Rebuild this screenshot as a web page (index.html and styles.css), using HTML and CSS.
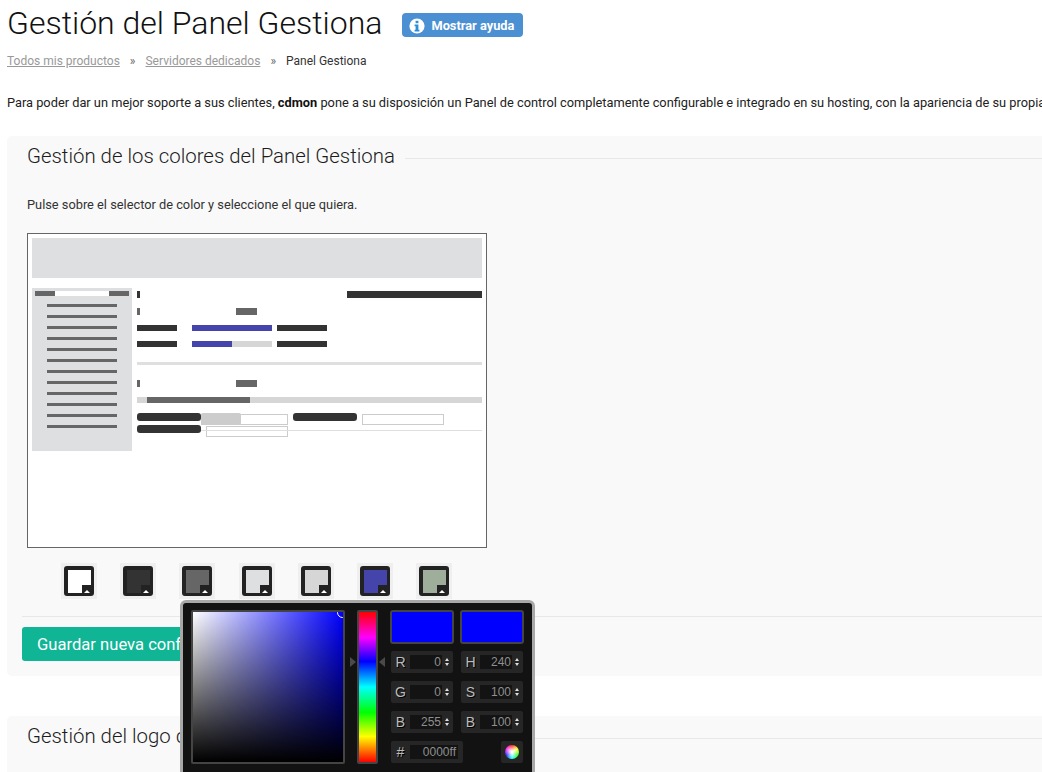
FILE: index.html
```html
<!DOCTYPE html>
<html lang="es">
<head>
<meta charset="utf-8">
<title>Gestión del Panel Gestiona</title>
<link rel="stylesheet" href="styles.css">
</head>
<body>
<main class="page">
  <header class="page-head">
    <h1 class="page-title">Gestión del Panel Gestiona</h1>
    <a class="help-btn" href="#">
      <svg class="help-icon" viewBox="0 0 16 16" width="16" height="16"><circle cx="8" cy="8" r="7.6" fill="#fff"/><rect x="6.6" y="2.8" width="2.8" height="2.4" fill="#2b8fd8"/><path d="M5.6 6.6h3.8v5.2h1v1.6H5.6v-1.6h1V8.2h-1z" fill="#2b8fd8"/></svg>
      <span>Mostrar ayuda</span>
    </a>
  </header>
  <nav class="crumbs">
    <a href="#">Todos mis productos</a><span class="sep">»</span><a href="#">Servidores dedicados</a><span class="sep">»</span><span class="current">Panel Gestiona</span>
  </nav>
  <p class="intro">Para poder dar un mejor soporte a sus clientes, <b>cdmon</b> pone a su disposición un Panel de control completamente configurable e integrado en su hosting, con la apariencia de su propia empresa.</p>

  <section class="card card-colors">
    <div class="card-title"><h2>Gestión de los colores del Panel Gestiona</h2><span class="rule"></span></div>
    <p class="hint">Pulse sobre el selector de color y seleccione el que quiera.</p>
    <div class="preview">
      <svg width="458" height="313" viewBox="28 234 458 313" class="preview-svg" shape-rendering="crispEdges">
        <g fill="#dedfe1">
          <rect x="32" y="238" width="450" height="40"/>
          <rect x="32" y="288" width="100" height="163"/>
          <rect x="137" y="362" width="345" height="3"/>
        </g>
        <rect x="55" y="291" width="54" height="5" fill="#fff"/>
        <g fill="#666">
          <rect x="35" y="291" width="20" height="5"/><rect x="109" y="291" width="20" height="5"/>
          <rect x="47" y="304" width="70" height="3"/><rect x="47" y="315" width="70" height="3"/>
          <rect x="47" y="326" width="70" height="3"/><rect x="47" y="337" width="70" height="3"/>
          <rect x="47" y="348" width="70" height="3"/><rect x="47" y="359" width="70" height="3"/>
          <rect x="47" y="370" width="70" height="3"/><rect x="47" y="381" width="70" height="3"/>
          <rect x="47" y="392" width="70" height="3"/><rect x="47" y="403" width="70" height="3"/>
          <rect x="47" y="414" width="70" height="3"/><rect x="47" y="425" width="70" height="3"/>
          <rect x="137" y="308" width="3" height="7"/><rect x="236" y="308" width="21" height="7"/>
          <rect x="137" y="380" width="3" height="7"/><rect x="236" y="380" width="21" height="7"/>
        </g>
        <g fill="#333">
          <rect x="137" y="291" width="3" height="7"/><rect x="347" y="291" width="135" height="7"/>
          <rect x="137" y="325" width="40" height="6"/><rect x="277" y="325" width="50" height="6"/>
          <rect x="137" y="341" width="40" height="6"/><rect x="277" y="341" width="50" height="6"/>
        </g>
        <rect x="232" y="341" width="40" height="6" fill="#d6d6d6"/>
        <rect x="192" y="325" width="80" height="6" fill="#4444aa"/>
        <rect x="192" y="341" width="40" height="6" fill="#4444aa"/>
        <rect x="137" y="397" width="345" height="6" fill="#d6d6d6"/>
        <rect x="147" y="397" width="103" height="6" fill="#666"/>
        <g fill="#fff" stroke="#ccc" stroke-width="1">
          <rect x="201.5" y="414.5" width="86" height="10"/>
          <rect x="206.5" y="426.5" width="81" height="10"/>
          <rect x="362.5" y="414.5" width="81" height="10"/>
        </g>
        <rect x="201" y="430" width="281" height="1" fill="#dedfe1"/>
        <g shape-rendering="auto">
          <rect x="137" y="413" width="64" height="8" rx="3" fill="#333"/>
          <rect x="137" y="425" width="64" height="8" rx="3" fill="#333"/>
          <rect x="293" y="413" width="64" height="8" rx="3" fill="#333"/>
          <rect x="201" y="413" width="40" height="12" rx="2" fill="#ccc"/>
        </g>
      </svg>
    </div>
    <div class="swatches">
      <div class="swatch"><span class="fill fill-white"></span></div>
      <div class="swatch"><span class="fill fill-dark"></span></div>
      <div class="swatch"><span class="fill fill-mid"></span></div>
      <div class="swatch"><span class="fill fill-pale"></span></div>
      <div class="swatch"><span class="fill fill-light"></span></div>
      <div class="swatch"><span class="fill fill-blue"></span></div>
      <div class="swatch"><span class="fill fill-sage"></span></div>
    </div>
    <div class="actions">
      <button class="save" type="button">Guardar nueva configuración</button>
      <a class="reset" href="#">Restaurar colores por defecto</a>
    </div>
  </section>

  <section class="card card-logo">
    <div class="card-title"><h2>Gestión del logo del Panel Gestiona</h2><span class="rule"></span></div>
  </section>
</main>

<div class="picker">
  <div class="sat-box"><div class="sat-area"><span class="sat-handle"></span></div></div>
  <div class="hue-col">
    <span class="tri tri-r"></span>
    <div class="hue-box"><div class="hue-area"></div></div>
    <span class="tri tri-l"></span>
  </div>
  <div class="controls">
    <div class="chip"></div><div class="chip"></div>
    <div class="field"><label>R</label><span class="value">0</span><span class="spin"></span></div>
    <div class="field"><label>H</label><span class="value">240</span><span class="spin"></span></div>
    <div class="field"><label>G</label><span class="value">0</span><span class="spin"></span></div>
    <div class="field"><label>S</label><span class="value">100</span><span class="spin"></span></div>
    <div class="field"><label>B</label><span class="value">255</span><span class="spin"></span></div>
    <div class="field"><label>B</label><span class="value">100</span><span class="spin"></span></div>
    <div class="field field-hex"><label>#</label><span class="value">0000ff</span></div>
    <div class="wheel-btn"><span class="wheel"></span></div>
  </div>
</div>
</body>
</html>
```
FILE: styles.css
```css
* { box-sizing: border-box; }
html, body { margin: 0; height: 100%; overflow: hidden; background: #fff; }
body { font-family: Roboto, "Liberation Sans", sans-serif; color: #222; font-size: 12.8px; position: relative; }
.page { width: 1600px; padding: 0 0 0 7px; }

.page-head { display: flex; align-items: center; height: 46px; }
.page-title { margin: 0; font-size: 32px; font-weight: 300; color: #111; line-height: 46px; white-space: nowrap; }
.help-btn { margin-left: 20px; height: 24px; width: 121px; display: flex; align-items: center; padding-left: 7px; gap: 6px; background: #4a90d2; border-radius: 4px; color: #fff; font-weight: 700; font-size: 12.8px; text-decoration: none; position: relative; top: 2px; }
.help-icon { flex: none; margin-top: 2px; }

.crumbs { margin-top: 6px; font-size: 12px; line-height: 18px; height: 18px; }
.crumbs a { color: #999; text-decoration: underline; }
.crumbs .sep { color: #666; margin: 0 10px; }
.crumbs .current { color: #333; }

.intro { margin: 24px 0 0; line-height: 18px; white-space: nowrap; font-size: 12.8px; color: #222; }
.intro b { color: #111; }

.card { background: #f9f9f9; border-radius: 5px; padding: 0 0 0 15px; }
.card-colors { margin-top: 24px; height: 540px; }
.card-logo { margin-top: 40px; height: 200px; }
.card-title { display: flex; align-items: center; height: 40px; padding: 0 0 0 5px; }
.card-title h2 { margin: 0; font-size: 20.4px; font-weight: 300; color: #1c1c1c; white-space: nowrap; line-height: 40px; }
.rule { flex: 1; height: 1px; background: #e8e8e8; margin: 4px 0 0 10px; }
.hint { margin: 20px 0 0 5px; line-height: 18px; font-size: 12.8px; color: #333; }
.preview { margin: 19px 0 0 5px; width: 460px; height: 315px; border: 1px solid #666; background: #fff; }
.preview-svg { display: block; }

.swatches { display: flex; margin: 15px 0 0 39px; gap: 23px; }
.swatch { width: 36px; height: 36px; padding: 3px; background: #efefef; }
.swatch:nth-child(3) { margin-right: 1px; }
.fill { display: block; width: 30px; height: 30px; background: #222; border-radius: 3px; position: relative; border-style: solid; border-color: #222; border-width: 4px 3px 3px 4px; }
.fill::before { content: ""; position: absolute; inset: 0; background: var(--c); clip-path: polygon(0 0, 100% 0, 100% 15px, 14px 15px, 14px 100%, 0 100%); }
.fill::after { content: ""; position: absolute; right: 1px; bottom: 0; border: 3px solid transparent; border-top: 0; border-bottom: 3px solid #fff; }
.fill-white { --c: #fff; }
.fill-dark { --c: #333; }
.fill-mid { --c: #666; }
.fill-pale { --c: #dedfe1; }
.fill-light { --c: #d6d6d6; }
.fill-blue { --c: #4444aa; }
.fill-sage { --c: #9fae9b; }

.actions { display: flex; align-items: center; margin-top: 17px; border-top: 1px solid #e8e8e8; padding-top: 10px; width: 1020px; }
.save { height: 34px; width: 240px; padding: 0 15px; text-align: left; background: #10b596; border: 0; border-radius: 3px; color: #fff; font: 400 16.6px Roboto, sans-serif; white-space: nowrap; }
.reset { margin-left: 104px; font-size: 12.8px; color: #777; text-decoration: underline; white-space: nowrap; }

.picker { position: absolute; left: 180px; top: 600px; width: 355px; height: 190px; background: #121212; border: 3px solid #a8a8a8; border-radius: 6px; padding: 7px 8px; display: flex; }
.sat-box { width: 154px; height: 154px; padding: 2px; background: #444; border-radius: 2px; flex: none; }
.sat-area { width: 150px; height: 150px; position: relative; overflow: hidden; background: linear-gradient(to top, #000, transparent), linear-gradient(to right, #fff, #00f); }
.sat-handle { position: absolute; right: -5px; top: -5px; width: 11px; height: 11px; border: 1px solid #fff; border-radius: 50%; }
.hue-col { display: flex; align-items: flex-start; width: 45px; flex: none; height: 154px; padding-left: 5px; gap: 1px; }
.hue-box { width: 21px; height: 154px; padding: 2px; background: #444; border-radius: 2px; flex: none; }
.hue-area { height: 100%; background: linear-gradient(to bottom, #f00, #f0f 17%, #00f 33%, #0ff 50%, #0f0 67%, #ff0 83%, #f00); }
.tri { width: 0; height: 0; border: 5px solid transparent; flex: none; margin-top: 47px; }
.tri-r { border-left: 6px solid #4a4a4a; border-right: 0; }
.tri-l { border-right: 6px solid #4a4a4a; border-left: 0; }

.controls { display: grid; grid-template-columns: 64px 64px; grid-template-rows: 33px; grid-auto-rows: 22px; column-gap: 6px; row-gap: 8px; align-content: start; }
.chip { height: 34px; background: #00f; border: 2px solid #444; border-radius: 3px; }
.field { margin: 0 1px; height: 22px; background: #262626; border-radius: 2px; display: flex; align-items: center; position: relative; color: #aaa; font: 400 14px "Liberation Sans", Arial, sans-serif; }
.field label { width: 19px; text-align: center; color: #bbb; text-shadow: 1px 1px 0 #000; }
.value { width: 32px; height: 14px; background: #131313; font-size: 12px; line-height: 14px; text-align: right; color: #8f8f8f; padding-right: 1px; }
.spin { margin-left: 3px; display: flex; flex-direction: column; gap: 2px; }
.spin::before { content: ""; border: 2px solid transparent; border-top: 0; border-bottom: 3px solid #ddd; }
.spin::after { content: ""; border: 2px solid transparent; border-bottom: 0; border-top: 3px solid #ddd; }
.field-hex { width: 72px; }
.field-hex .value { width: 48px; padding-right: 2px; }
.wheel-btn { justify-self: end; width: 22px; height: 22px; margin-right: 1px; background: #262626; border-radius: 2px; display: flex; align-items: center; justify-content: center; }
.wheel { width: 14px; height: 14px; border-radius: 50%; background: radial-gradient(circle, #fff 10%, transparent 65%), conic-gradient(#f33, #ff3, #3f3, #3ff, #33f, #f3f, #f33); }
```
